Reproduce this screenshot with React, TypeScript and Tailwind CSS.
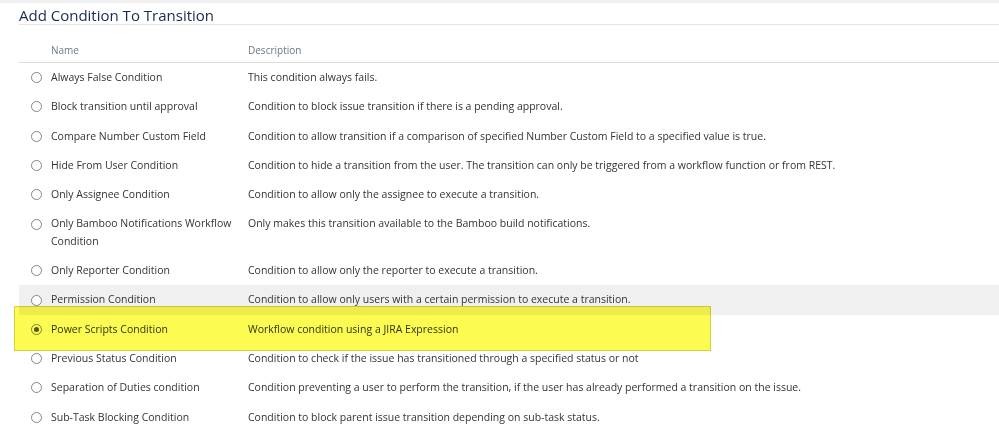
import React from 'react';

type Condition = {
  name: string;
  description: string;
};

const CONDITIONS: Condition[] = [
  { name: 'Always False Condition', description: 'This condition always fails.' },
  { name: 'Block transition until approval', description: 'Condition to block issue transition if there is a pending approval.' },
  { name: 'Compare Number Custom Field', description: 'Condition to allow transition if a comparison of specified Number Custom Field to a specified value is true.' },
  { name: 'Hide From User Condition', description: 'Condition to hide a transition from the user. The transition can only be triggered from a workflow function or from REST.' },
  { name: 'Only Assignee Condition', description: 'Condition to allow only the assignee to execute a transition.' },
  { name: 'Only Bamboo Notifications Workflow Condition', description: 'Only makes this transition available to the Bamboo build notifications.' },
  { name: 'Only Reporter Condition', description: 'Condition to allow only the reporter to execute a transition.' },
  { name: 'Permission Condition', description: 'Condition to allow only users with a certain permission to execute a transition.' },
  { name: 'Power Scripts Condition', description: 'Workflow condition using a JIRA Expression' },
  { name: 'Previous Status Condition', description: 'Condition to check if the issue has transitioned through a specified status or not' },
  { name: 'Separation of Duties condition', description: 'Condition preventing a user to perform the transition, if the user has already performed a transition on the issue.' },
  { name: 'Sub-Task Blocking Condition', description: 'Condition to block parent issue transition depending on sub-task status.' },
];

function Radio({ checked }: { checked: boolean }) {
  return (
    <span className="flex h-[11px] w-[11px] items-center justify-center rounded-full border border-[#858585] bg-white">
      {checked && <span className="h-[5px] w-[5px] rounded-full bg-[#555555]" />}
    </span>
  );
}

export default function App() {
  const [selected, setSelected] = React.useState(8);
  const hovered = 7;

  return (
    <div className="relative h-[428px] w-[999px] overflow-hidden bg-white font-['Open_Sans',sans-serif] text-[#333333]">
      <div className="h-[3px] bg-[#f0f0f0]" />
      <div className="pl-[19px]">
        <h2 className="border-b border-[#e4e4e4] pt-[3px] text-[15px] leading-[18px] text-[#172b4d]">
          Add Condition To Transition
        </h2>

        <div className="mt-[17px] flex border-b border-[#dcdcdc] pb-[4px] text-[10px] leading-[16px] text-[#6b778c]">
          <div className="w-[32px]" />
          <div className="w-[197px]">Name</div>
          <div className="flex-1">Description</div>
        </div>

        <div className="text-[10.5px] leading-[17.3px]">
          {CONDITIONS.map((c, i) => (
            <div
              key={c.name}
              onClick={() => setSelected(i)}
              className={`flex cursor-pointer py-[6px] ${i === hovered ? 'bg-[#f0f0f0]' : ''}`}
            >
              <div className="flex h-[17.3px] w-[32px] items-center pl-[12px]">
                <Radio checked={i === selected} />
              </div>
              <div className="w-[197px] pr-[6px]">{c.name}</div>
              <div className="flex-1">{c.description}</div>
            </div>
          ))}
        </div>
      </div>

      {/* yellow highlighter mark over the selected row */}
      <div className="pointer-events-none absolute left-[14px] top-[306px] h-[45px] w-[697px] border border-[#d8d23a] bg-[#fbfb52] mix-blend-multiply" />
    </div>
  );
}
